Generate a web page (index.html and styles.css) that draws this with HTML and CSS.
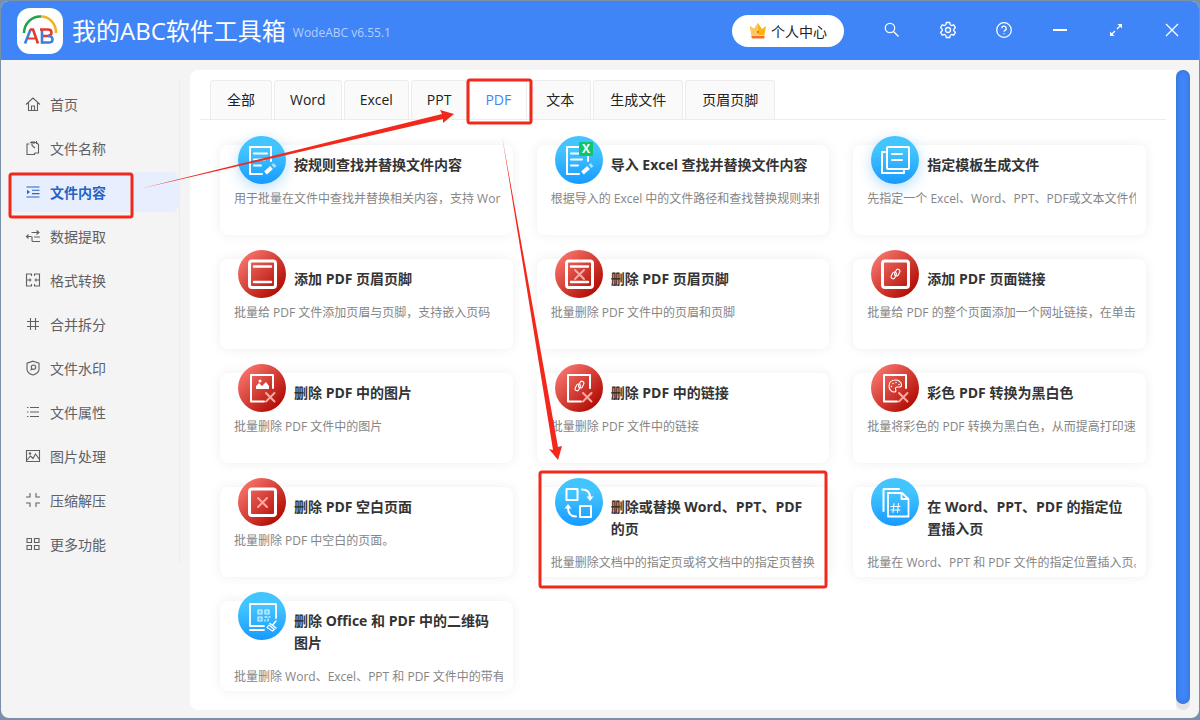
FILE: index.html
```html
<!DOCTYPE html>
<html lang="zh-CN">
<head>
    <meta charset="UTF-8">
    <meta name="viewport" content="width=device-width, initial-scale=1.0">
    <title>我的ABC软件工具箱</title>
    <link rel="stylesheet" href="styles.css">
</head>
<body>

    <!-- shared icon shapes -->
    <svg class="defs" width="0" height="0" aria-hidden="true">
        <symbol id="i-edit" viewBox="0 0 48 48">
            <path d="M33 25V11H12v27h12" />
            <path d="M16 17.500h13M16 23.500h11M16 29.500h7" stroke-width="2" />
            <path d="M27.500 37l6-5.500" stroke-width="4" stroke-linecap="butt" />
            <path d="M35 30.500l2-2" stroke-width="4" stroke-linecap="butt" opacity=".6" />
        </symbol>
        <symbol id="i-excel" viewBox="0 0 48 48">
            <use href="#i-edit" />
            <rect x="24" y="6" width="14" height="14" rx="1" fill="#12c46f" stroke="none" />
            <text x="31" y="17" class="x-mark">X</text>
        </symbol>
        <symbol id="i-template" viewBox="0 0 48 48">
            <rect x="16" y="11" width="22" height="22" rx="1" />
            <path d="M14 16h-3v21h22v-2" />
            <path d="M21 18h10M21 24h10" />
        </symbol>
        <symbol id="i-page" viewBox="0 0 48 48">
            <rect x="11.500" y="11" width="26" height="26.500" rx="2.500" stroke-width="3" />
        </symbol>
        <symbol id="i-headfoot" viewBox="0 0 48 48">
            <use href="#i-page" />
            <path d="M16 16.500h17M16 32h17" stroke-width="2.500" />
        </symbol>
        <symbol id="i-headfoot-del" viewBox="0 0 48 48">
            <use href="#i-headfoot" />
            <path d="M20 20l9 9m0-9l-9 9" class="pink" />
        </symbol>
        <symbol id="i-blank-del" viewBox="0 0 48 48">
            <use href="#i-page" />
            <path d="M20 20l9 9m0-9l-9 9" class="pink" />
        </symbol>
        <symbol id="i-chain" viewBox="0 0 48 48">
            <g transform="rotate(25 24.500 24)" stroke-width="1.100">
                <rect x="23.500" y="18.500" width="4" height="7" rx="2" />
                <rect x="21.500" y="22.500" width="4" height="7" rx="2" />
            </g>
        </symbol>
        <symbol id="i-link" viewBox="0 0 48 48">
            <use href="#i-page" />
            <use href="#i-chain" />
        </symbol>
        <symbol id="i-cut" viewBox="0 0 48 48">
            <path d="M35 24V11H13v26.500h13" />
            <path d="M28 29l8.500 8.500m0-8.500L28 37.500" class="pink" />
        </symbol>
        <symbol id="i-image-del" viewBox="0 0 48 48">
            <use href="#i-cut" />
            <path d="M18 25v-3l3-3 3 3 4-4 3 4v3z" fill="#fff" stroke="none" />
            <circle cx="22" cy="17" r="1.500" fill="#fff" stroke="none" />
        </symbol>
        <symbol id="i-link-del" viewBox="0 0 48 48">
            <use href="#i-cut" />
            <use href="#i-chain" y="-2" />
        </symbol>
        <symbol id="i-palette" viewBox="0 0 48 48">
            <use href="#i-cut" />
            <path d="M24.500 16c-4 0-6.500 2.500-6.500 6s2.500 6 5.500 6c2 0 1.500-2 1-3s.5-2 2-2h2c1.500 0 2-1 2-2 0-3-3-5-6-5z" stroke-width="1.100" />
            <path d="M20.500 22.500v.1M22 19.500v.1M25 18.500v.1M28 20.500v.1" stroke-width="1.500" />
        </symbol>
        <symbol id="i-swap" viewBox="0 0 48 48">
            <rect x="11.500" y="11" width="11" height="11" />
            <rect x="25" y="28" width="11" height="11" />
            <path d="M27 11.500c5 0 8 3 8 8M21 38.500c-5 0-8-3-8-9" />
            <path d="M31.500 18.500h7L35 23zM9.500 30.500h7L13 26z" fill="#fff" stroke="none" />
        </symbol>
        <symbol id="i-insert" viewBox="0 0 48 48">
            <path d="M12.500 33V11H28" />
            <path d="M17 15h14l6.500 6v17.500H17zM30.500 15.500V21H37" stroke-width="1.800" />
            <path d="M23 25.500l-1 9M27.500 25.500l-1 9M20 28.500h9M20 32h9" stroke-width="1.100" />
        </symbol>
        <symbol id="i-qr" viewBox="0 0 48 48">
            <path d="M38 26V12H12v22h14M12 38h14" stroke-width="1.800" />
            <path d="M20 18h4v4h-4zM27 18h4v4h-4zM20 25h4v4h-4z" stroke-width="1.200" opacity=".85" />
            <path d="M22 20v.1M29 20v.1M22 27v.1M27 25h2M31 25h1M27 28v1M30 27v2" stroke-width="1.400" opacity=".75" />
            <path d="M38 29l-3 3.500M32 31.500l6 4.500" stroke-width="1.500" />
            <path d="M31 33l5.500 4.500-2 1.500-5.500-3.500z" stroke-width="1.200" />
        </symbol>
    </svg>

    <div class="window">
        <header class="topbar">
            <svg class="logo" viewBox="0 0 46 46" aria-hidden="true">
                <rect width="46" height="46" rx="13" fill="#fff" />
                <g fill="none" stroke-width="2.600" stroke-linecap="butt">
                    <path d="M7 25A16 17 0 0 1 24 8.500" stroke="#22a34a" />
                    <path d="M24 8.500A15 16 0 0 1 39 25" stroke="#f4b223" />
                    <path d="M8 35.500l5.500-14" stroke="#3b7fe0" />
                    <path d="M13 21.500h3l5 14" stroke="#e23b30" />
                    <path d="M11 30.500h8" stroke="#e23b30" stroke-width="2" />
                    <path d="M25 35.500V21" stroke="#3b7fe0" />
                    <path d="M23 21.500h8q3.500 0 3.500 3t-3.500 3.500h-5" stroke="#e23b30" />
                    <path d="M31 28q4.500 0 4.500 3.500T31 34.500h-7" stroke="#3b7fe0" />
                </g>
            </svg>
            <h1>我的ABC软件工具箱</h1>
            <span class="version">WodeABC v6.55.1</span>

            <button class="account" type="button">
                <svg width="18" height="18" viewBox="0 0 18 18" aria-hidden="true">
                    <path d="M1 4l4 3 4-6 4 6 4-3-1.500 9.500h-13z" fill="#fdb515" />
                    <path d="M1 4l4 3 4-6v12.500H2.500z" fill="#fbc765" />
                    <path d="M2.500 14h13v1.500q0 1-1 1h-11q-1 0-1-1z" fill="#f4702a" />
                    <circle cx="9" cy="10" r="1" fill="#e2502a" />
                </svg>
                个人中心
            </button>

            <nav class="tools">
                <button type="button" aria-label="搜索">
                    <svg viewBox="0 0 18 18"><circle cx="7" cy="7" r="4.700" /><path d="M10.500 10.500l5 5" /></svg>
                </button>
                <button type="button" aria-label="设置">
                    <svg viewBox="0 0 18 18"><circle cx="9" cy="9" r="2.500" /><path d="M7.300 1.500h3.400l.5 2.200 1.400.8 2.100-.7 1.700 2.900-1.600 1.500v1.600l1.600 1.500-1.700 2.900-2.100-.7-1.400.8-.5 2.200H7.300l-.5-2.200-1.400-.8-2.100.7-1.700-2.900 1.600-1.500V8.200L1.600 6.700l1.700-2.900 2.100.7 1.400-.8z" /></svg>
                </button>
                <button type="button" aria-label="帮助">
                    <svg viewBox="0 0 18 18"><circle cx="9" cy="9" r="7.300" /><path d="M6.800 7.300a2.200 2.200 0 1 1 3.200 2c-.7.400-1 .7-1 1.500M9 12.300v1" /></svg>
                </button>
                <button type="button" aria-label="最小化">
                    <svg viewBox="0 0 18 18"><path d="M2 9h14" stroke-width="1.800" /></svg>
                </button>
                <button type="button" aria-label="最大化">
                    <svg viewBox="0 0 18 18"><path d="M10 8l4-4M8 10l-4 4" /><path d="M10.500 3H15v4.500zM3 10.500V15h4.500z" class="solid" /></svg>
                </button>
                <button type="button" aria-label="关闭">
                    <svg viewBox="0 0 18 18"><path d="M3 3l12 12M15 3L3 15" /></svg>
                </button>
            </nav>
        </header>

        <div class="body">
            <aside class="sidebar">
                <a href="#"><svg viewBox="0 0 16 16"><path d="M1 8.500L8 2l7 6.500M3.500 7v7.500h9V7M6.500 14.500V10h3v4.500" /></svg>首页</a>
                <a href="#"><svg viewBox="0 0 16 16"><path d="M4.500 4H2v10.500h7.500V13M5 2.500h6.500l2 2V13H9.500M7 1v4.500L10 8M9 1v3M11.500 1v3" /></svg>文件名称</a>
                <a href="#" class="active"><svg viewBox="0 0 16 16"><path d="M1.500 3h13M7 6.300h7.500M7 9.600h7.500M1.500 13h13" /><path d="M2 5.800v4.400L5 8z" class="solid" /></svg>文件内容</a>
                <a href="#"><svg viewBox="0 0 16 16"><path d="M6.500 4.500H14M11.500 2.500l2.500 2-2.500 2M1.500 8.500h5M3.500 6.500l-2 2 2 2M9 9h6M15 13.500H8q-1 0-1-1v-4" /></svg>数据提取</a>
                <a href="#"><svg viewBox="0 0 16 16"><path d="M6.500 4V2h-5v12h5v-2M9.500 4V2h5v12h-5v-2M2 8h4.500M9.500 8H14M5 6.500v3M11 6.500v3" /></svg>格式转换</a>
                <a href="#"><svg viewBox="0 0 16 16"><path d="M5.500 2v12M10.500 2v12M2 5.500h12M2 10.500h12" /></svg>合并拆分</a>
                <a href="#"><svg viewBox="0 0 16 16"><path d="M8 1.200l6 2v6c0 3-3 4.800-6 5.800-3-1-6-2.800-6-5.800v-6z" /><circle cx="8.500" cy="7.200" r="2.200" /><path d="M7 8.700L5.500 10.500" /></svg>文件水印</a>
                <a href="#"><svg viewBox="0 0 16 16"><path d="M5 3.500h9M5 8h9M5 12.500h9M2 3.500h1.500M2 8h1.500M2 12.500h1.500" /></svg>文件属性</a>
                <a href="#"><svg viewBox="0 0 16 16"><path d="M1.500 2.500h13v11h-13zM2 12l3.500-4 2.500 2.500L10.500 6l4 5.500" /><circle cx="5" cy="5.500" r=".8" /></svg>图片处理</a>
                <a href="#"><svg viewBox="0 0 16 16"><path d="M5 1v4H1M11 1v4h4M5 15v-4H1M11 15v-4h4" /></svg>压缩解压</a>
                <a href="#"><svg viewBox="0 0 16 16"><path d="M2 2.500h4.500v4H2zM9.500 2.500H14v4H9.500zM2 9.500h4.500v4H2zM9.500 9.500H14v4H9.500z" /></svg>更多功能</a>
            </aside>

            <main class="panel">
                <nav class="tabs">
                    <a href="#">全部</a>
                    <a href="#" class="latin">Word</a>
                    <a href="#" class="latin">Excel</a>
                    <a href="#" class="latin">PPT</a>
                    <a href="#" class="latin current">PDF</a>
                    <a href="#">文本</a>
                    <a href="#">生成文件</a>
                    <a href="#">页眉页脚</a>
                </nav>

                <section class="cards">
                    <article class="card">
                        <svg class="icon blue glow"><use href="#i-edit" /></svg>
                        <h2>按规则查找并替换文件内容</h2>
                        <p>用于批量在文件中查找并替换相关内容，支持 Wor</p>
                    </article>
                    <article class="card">
                        <svg class="icon blue"><use href="#i-excel" /></svg>
                        <h2>导入 Excel 查找并替换文件内容</h2>
                        <p>根据导入的 Excel 中的文件路径和查找替换规则来批</p>
                    </article>
                    <article class="card">
                        <svg class="icon blue glow"><use href="#i-template" /></svg>
                        <h2>指定模板生成文件</h2>
                        <p>先指定一个 Excel、Word、PPT、PDF或文本文件作</p>
                    </article>
                    <article class="card">
                        <svg class="icon red"><use href="#i-headfoot" /></svg>
                        <h2>添加 PDF 页眉页脚</h2>
                        <p>批量给 PDF 文件添加页眉与页脚，支持嵌入页码</p>
                    </article>
                    <article class="card">
                        <svg class="icon red"><use href="#i-headfoot-del" /></svg>
                        <h2>删除 PDF 页眉页脚</h2>
                        <p>批量删除 PDF 文件中的页眉和页脚</p>
                    </article>
                    <article class="card">
                        <svg class="icon red"><use href="#i-link" /></svg>
                        <h2>添加 PDF 页面链接</h2>
                        <p>批量给 PDF 的整个页面添加一个网址链接，在单击</p>
                    </article>
                    <article class="card">
                        <svg class="icon red"><use href="#i-image-del" /></svg>
                        <h2>删除 PDF 中的图片</h2>
                        <p>批量删除 PDF 文件中的图片</p>
                    </article>
                    <article class="card">
                        <svg class="icon red"><use href="#i-link-del" /></svg>
                        <h2>删除 PDF 中的链接</h2>
                        <p>批量删除 PDF 文件中的链接</p>
                    </article>
                    <article class="card">
                        <svg class="icon red"><use href="#i-palette" /></svg>
                        <h2>彩色 PDF 转换为黑白色</h2>
                        <p>批量将彩色的 PDF 转换为黑白色，从而提高打印速</p>
                    </article>
                    <article class="card">
                        <svg class="icon red"><use href="#i-blank-del" /></svg>
                        <h2>删除 PDF 空白页面</h2>
                        <p>批量删除 PDF 中空白的页面。</p>
                    </article>
                    <article class="card">
                        <svg class="icon blue"><use href="#i-swap" /></svg>
                        <h2>删除或替换 Word、PPT、PDF 的页</h2>
                        <p>批量删除文档中的指定页或将文档中的指定页替换</p>
                    </article>
                    <article class="card">
                        <svg class="icon blue"><use href="#i-insert" /></svg>
                        <h2>在 Word、PPT、PDF 的指定位置插入页</h2>
                        <p>批量在 Word、PPT 和 PDF 文件的指定位置插入页。</p>
                    </article>
                    <article class="card">
                        <svg class="icon blue"><use href="#i-qr" /></svg>
                        <h2>删除 Office 和 PDF 中的二维码图片</h2>
                        <p>批量删除 Word、Excel、PPT 和 PDF 文件中的带有</p>
                    </article>
                </section>
            </main>

            <div class="scrollbar"><div class="thumb"></div></div>
        </div>
    </div>

    <!-- step markers drawn over the window -->
    <svg class="marks" width="1200" height="720" viewBox="0 0 1200 720" aria-hidden="true">
        <rect x="10" y="174" width="122" height="43" rx="2" />
        <rect x="468" y="80" width="63" height="43" rx="2" />
        <rect x="540" y="472" width="286" height="115" rx="2" />
        <path d="M139 189L442 114l-2-4 14 4-11 9 0-4z" />
        <path d="M502 136L553 450l-4-1 9 11 4-14-4 1z" />
    </svg>

</body>
</html>
```

FILE: styles.css
```css
* {
    box-sizing: border-box;
}
body {
    margin: 0;
    padding: 1px 1px 2px;
    height: 100vh;
    background-color: #7990a8;
    font-family: "Open Sans", "Noto Sans CJK SC", sans-serif;
    font-size: 14px;
    color: #333;
}
a {
    color: inherit;
    text-decoration: none;
}
button {
    font: inherit;
    border: none;
    cursor: pointer;
}
.defs {
    position: absolute;
}
.window {
    display: flex;
    flex-direction: column;
    min-height: 100%;
    background-color: #f4f4f4;
    border-radius: 8px;
    overflow: hidden;
}

/* top bar */
.topbar {
    display: flex;
    align-items: center;
    height: 59px;
    padding-left: 16px;
    background-color: #3f85f7;
    color: #fff;
}
.logo {
    width: 46px;
    height: 46px;
}
h1 {
    margin: 0 7px 0 9px;
    font-size: 24px;
    font-weight: 400;
    line-height: 32px;
}
.version {
    padding-top: 4px;
    font-size: 12px;
    color: #b4d0fc;
}
.account {
    display: flex;
    align-items: center;
    justify-content: center;
    gap: 4px;
    width: 112px;
    height: 32px;
    margin-left: auto;
    margin-right: 20px;
    padding: 0;
    border-radius: 16px;
    background-color: #fff;
    color: #222;
}
.tools {
    display: flex;
    margin-right: -1px;
}
.tools button {
    display: flex;
    align-items: center;
    justify-content: center;
    width: 56px;
    height: 56px;
    padding: 0 0 2px;
    background: none;
}
.tools svg {
    width: 18px;
    height: 18px;
    fill: none;
    stroke: #fff;
    stroke-width: 1.3;
}
.tools .solid {
    fill: #fff;
    stroke: none;
}

/* layout */
.body {
    display: flex;
    flex: 1;
    padding: 10px 9px 8px 0;
}

/* sidebar */
.sidebar {
    display: flex;
    flex-direction: column;
    gap: 4px;
    flex: 0 0 179px;
    align-self: flex-start;
    margin: 10px 10px 0 0;
    padding: 4px 0 0 8px;
    border-right: 1px solid #ececec;
    color: #5f6064;
}
.sidebar a {
    display: flex;
    align-items: center;
    gap: 9px;
    height: 40px;
    padding: 0 0 1px 16px;
    border-radius: 8px;
}
.sidebar svg {
    width: 16px;
    height: 16px;
    fill: none;
    stroke: currentColor;
    stroke-width: 1.1;
}
.sidebar .solid {
    fill: currentColor;
    stroke: none;
}
.sidebar .active {
    background-color: #e7effe;
    color: #2563c4;
    font-weight: 700;
}

/* content */
.panel {
    flex: 1;
    min-width: 0;
    padding: 10px;
    background-color: #fff;
    border-radius: 8px 0 0 8px;
}
.tabs {
    display: flex;
    gap: 2px;
    padding: 0 10px;
    border-bottom: 1px solid #ececec;
}
.tabs a {
    height: 39px;
    padding: 0 16px;
    border: 1px solid #ececec;
    border-bottom: none;
    border-radius: 3px 3px 0 0;
    background-color: #fafafa;
    color: #222;
    line-height: 38px;
}
.tabs .latin {
    padding: 0 15px;
}
.tabs .current {
    background-color: #fff;
    color: #3f85f7;
}
.cards {
    display: grid;
    grid-template-columns: repeat(3, minmax(0, 1fr));
    gap: 24px;
    padding: 25px 20px 9px;
}
.card {
    position: relative;
    min-height: 90px;
    padding: 9px 10px 5px 14px;
    border-radius: 8px;
    background-color: #fff;
    box-shadow: 0 0 12px rgba(0, 0, 0, 0.07);
}
.card h2 {
    margin: 0 4px 14px 60px;
    font-size: 14px;
    font-weight: 700;
    line-height: 22px;
}
.card p {
    margin: 0;
    font-size: 12px;
    line-height: 18px;
    color: #858585;
    white-space: nowrap;
    overflow: hidden;
}
.icon {
    position: absolute;
    left: 18px;
    top: -9px;
    width: 48px;
    height: 48px;
    border-radius: 50%;
    fill: none;
    stroke: #fff;
    stroke-width: 2;
    stroke-linecap: round;
    stroke-linejoin: round;
}
.blue {
    background: linear-gradient(#42c4ff 30%, #189aff);
}
.red {
    background: linear-gradient(135deg, #f8766d 10%, #b00a02 88%);
}
.glow {
    box-shadow: 0 4px 14px rgba(30, 150, 240, 0.3);
}
.pink {
    stroke: #f9aaa5;
}
.x-mark {
    fill: #fff;
    stroke: none;
    font-size: 12px;
    font-weight: 700;
    text-anchor: middle;
}

/* scrollbar */
.scrollbar {
    flex: 0 0 14px;
    padding-bottom: 6px;
    border-radius: 7px;
    background-color: #e2e2e2;
}
.thumb {
    height: 100%;
    border-radius: 7px;
    background-color: #3f85f7;
    box-shadow: inset 0 0 5px rgba(0, 0, 0, 0.2);
}

.marks {
    position: absolute;
    left: 0;
    top: 0;
    pointer-events: none;
}
.marks rect {
    fill: none;
    stroke: #f3281d;
    stroke-width: 3;
}
.marks path {
    fill: #f3281d;
}
```
